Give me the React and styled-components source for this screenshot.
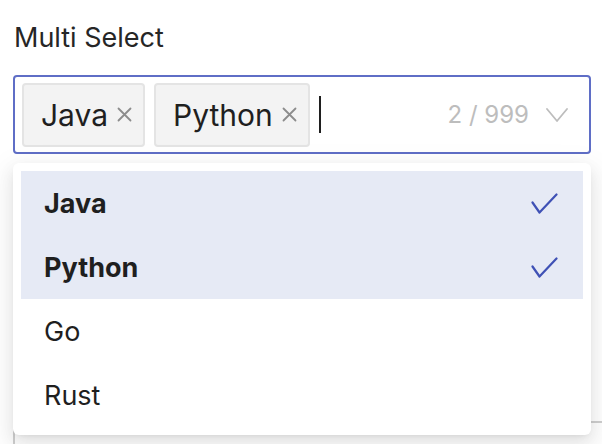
import styled, { createGlobalStyle } from 'styled-components';

const GlobalStyle = createGlobalStyle`
  html, body {
    margin: 0;
    padding: 0;
    background: #ffffff;
    overflow: hidden;
  }
  body {
    font-family: Inter, 'Noto Sans', 'Liberation Sans', sans-serif;
    color: #1f1f1f;
  }
`;

const options = [
  { label: 'Java', selected: true },
  { label: 'Python', selected: true },
  { label: 'Go', selected: false },
  { label: 'Rust', selected: false },
];

function CloseIcon() {
  return (
    <svg width="15" height="15" viewBox="0 0 15 15" fill="none">
      <path d="M1.5 1.5 L13.5 13.5 M13.5 1.5 L1.5 13.5" stroke="#8c8c8c" strokeWidth="1.8" strokeLinecap="round" />
    </svg>
  );
}

function ChevronIcon() {
  return (
    <svg width="22" height="14" viewBox="0 0 22 14" fill="none">
      <path d="M1 1 L11 13 L21 1" stroke="#bdbdbd" strokeWidth="1.8" strokeLinecap="round" strokeLinejoin="round" />
    </svg>
  );
}

function CheckIcon() {
  return (
    <svg width="27" height="21" viewBox="0 0 27 21" fill="none">
      <path d="M1.5 9.5 L8.5 19.5 L25.5 1.5" stroke="#3f51b5" strokeWidth="2.2" strokeLinecap="round" strokeLinejoin="round" />
    </svg>
  );
}

export default function App() {
  return (
    <>
      <GlobalStyle />
      <Page>
        <Label>Multi Select</Label>
        <Field>
          <SelectBox>
            {options.filter((o) => o.selected).map((o) => (
              <Tag key={o.label}>
                <TagText>{o.label}</TagText>
                <TagClose><CloseIcon /></TagClose>
              </Tag>
            ))}
            <Caret />
            <Spacer />
            <Count>2 / 999</Count>
            <ChevronIcon />
          </SelectBox>
          <Menu>
            {options.map((o) => (
              <Option key={o.label} $selected={o.selected}>
                <span>{o.label}</span>
                {o.selected && <CheckIcon />}
              </Option>
            ))}
          </Menu>
        </Field>
        <NextField />
      </Page>
    </>
  );
}

const Page = styled.div`
  padding: 20px 11px 0 13px;
  height: 444px;
  box-sizing: border-box;
  display: flex;
  flex-direction: column;
`;

const Label = styled.div`
  font-size: 27px;
  line-height: 36px;
  font-weight: 400;
  color: #262626;
  padding-left: 1px;
  margin-bottom: 19px;
`;

const Field = styled.div`
  position: relative;
`;

const SelectBox = styled.div`
  display: flex;
  align-items: center;
  height: 79px;
  box-sizing: border-box;
  border: 2px solid #5f6ec6;
  border-radius: 4px;
  padding: 0 21px 0 7px;
  background: #ffffff;
`;

const Tag = styled.div`
  display: flex;
  align-items: center;
  gap: 9px;
  height: 64px;
  box-sizing: border-box;
  padding: 0 11px 0 17px;
  margin-right: 9px;
  background: #f3f3f3;
  border: 2px solid #e4e4e4;
  border-radius: 4px;
`;

const TagText = styled.span`
  font-size: 30px;
  line-height: 1;
  color: #1f1f1f;
`;

const TagClose = styled.span`
  display: flex;
  align-items: center;
`;

const Caret = styled.span`
  display: block;
  width: 2px;
  height: 37px;
  background: #1f1f1f;
`;

const Spacer = styled.div`
  flex: 1;
`;

const Count = styled.span`
  font-size: 24px;
  color: #bdbdbd;
  margin-right: 17px;
`;

const Menu = styled.div`
  position: absolute;
  top: 88px;
  left: 0;
  right: 0;
  z-index: 2;
  padding: 8px;
  background: #ffffff;
  border-radius: 6px;
  box-shadow: 0 6px 16px rgba(0, 0, 0, 0.08), 0 3px 6px -4px rgba(0, 0, 0, 0.12), 0 9px 28px 8px rgba(0, 0, 0, 0.05);
`;

const Option = styled.div`
  display: flex;
  align-items: center;
  justify-content: space-between;
  height: 64px;
  padding: 0 25px 0 23px;
  font-size: 27px;
  font-weight: ${(p) => (p.$selected ? 700 : 400)};
  color: #1f1f1f;
  background: ${(p) => (p.$selected ? '#e6eaf5' : 'transparent')};
`;

const NextField = styled.div`
  margin-top: auto;
  height: 21px;
  margin-right: -20px;
  border-top: 2px solid #cfcfcf;
  border-left: 2px solid #cfcfcf;
`;
